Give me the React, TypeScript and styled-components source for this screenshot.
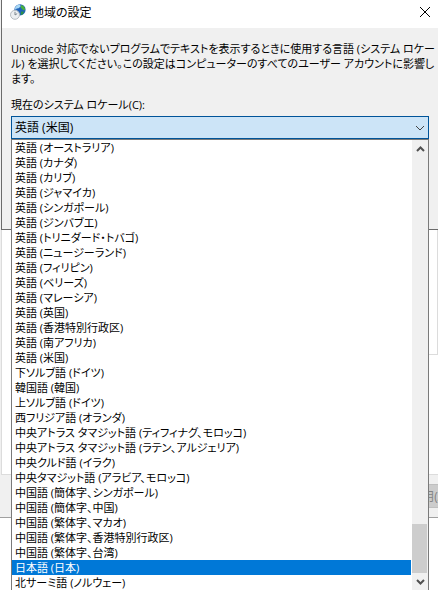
import React, { useState } from "react";
import styled, { createGlobalStyle } from "styled-components";

const Global = createGlobalStyle`
  * { box-sizing: border-box; }
  html, body, #root { height: 100%; }
  body {
    margin: 0;
    overflow: hidden;
    color: #000;
    font: 12px/15px "Open Sans", "Noto Sans CJK JP", sans-serif;
    font-feature-settings: "palt";
  }
`;

const Desktop = styled.div`
  position: relative;
  height: 100%;
  min-height: 100vh;
  overflow: hidden;
  background: #fff;
`;

const BackWindow = styled.div`
  position: absolute;
  inset: 0;
  display: flex;
  flex-direction: column;
`;

const BackBody = styled.div`
  padding-left: 1px;
  background: #f0f0f0;
`;

const BackPage = styled.div`
  height: 475px;
  padding-left: 12px;
  border-left: 1px solid #dcdcdc;
  border-bottom: 1px solid #dcdcdc;
  background: #fff;
`;

const BackGroup = styled.div`
  height: 355px;
  border: 1px solid #dcdcdc;
`;

const BackFooter = styled.div`
  display: flex;
  justify-content: flex-end;
  align-items: center;
  height: 43px;
  background: #f0f0f0;
  border-bottom: 1px solid #a0a0a0;
`;

const ApplyButton = styled.button`
  width: 75px;
  height: 24px;
  margin-right: -29px;
  padding: 0;
  border: 1px solid #bfbfbf;
  background: #ccc;
  color: #838383;
  font: inherit;
`;

const Dialog = styled.section`
  position: relative;
  margin-left: 1px;
  border-left: 1px solid #6b6b6b;
  border-bottom: 1px solid #6b6b6b;
  height: 230px;
  background: #f0f0f0;
`;

const TitleBar = styled.header`
  display: flex;
  align-items: center;
  height: 28px;
  padding: 0 7px 4px 8px;
  background: #fff;
`;

const Title = styled.h1`
  flex: 1;
  margin: 0 0 0 6px;
  font: inherit;
`;

const CloseButton = styled.button`
  display: flex;
  padding: 0;
  border: 0;
  background: none;
`;

const Content = styled.div`
  padding: 13px 0 0 9px;
`;

const Description = styled.p`
  margin: 0 0 11px;
  font-size: 11px;
`;

const Label = styled.label`
  display: block;
  margin-bottom: 4px;
  font-size: 11px;
`;

const ComboRow = styled.div`
  padding-right: 9px;
`;

const Combo = styled.button`
  display: flex;
  align-items: center;
  justify-content: space-between;
  width: 100%;
  height: 23px;
  padding: 0 3px;
  border: 1px solid #005499;
  background: #cce4f7;
  color: #000;
  font: inherit;
  font-feature-settings: inherit;
`;

const Popup = styled.div`
  display: flex;
  position: absolute;
  top: 139px;
  left: 9px;
  right: 9px;
  height: 456px;
  border: 1px solid #7a7a7a;
  background: #fff;
`;

const Options = styled.ul`
  flex: 1;
  min-width: 0;
  margin: 0;
  padding: 0 1px 0 0;
  list-style: none;
  font-size: 11px;
`;

const Option = styled.li<{ $selected: boolean }>`
  height: 15px;
  padding-left: 3px;
  white-space: nowrap;
  cursor: default;
  background: ${(p) => (p.$selected ? "#0078d7" : "#fff")};
  color: ${(p) => (p.$selected ? "#fff" : "#000")};
`;

const ScrollBar = styled.div`
  display: flex;
  flex-direction: column;
  width: 16px;
  height: 450px;
  background: #f0f0f0;
`;

const ScrollButton = styled.button`
  display: flex;
  align-items: center;
  justify-content: center;
  width: 16px;
  height: 17px;
  padding: 0;
  border: 0;
  background: none;
`;

const Track = styled.div`
  flex: 1;
  display: flex;
  align-items: flex-end;
`;

const Thumb = styled.div`
  width: 15px;
  height: 49px;
  background: #cdcdcd;
`;

const locales = [
  "英語 (オーストラリア)",
  "英語 (カナダ)",
  "英語 (カリブ)",
  "英語 (ジャマイカ)",
  "英語 (シンガポール)",
  "英語 (ジンバブエ)",
  "英語 (トリニダード・トバゴ)",
  "英語 (ニュージーランド)",
  "英語 (フィリピン)",
  "英語 (ベリーズ)",
  "英語 (マレーシア)",
  "英語 (英国)",
  "英語 (香港特別行政区)",
  "英語 (南アフリカ)",
  "英語 (米国)",
  "下ソルブ語 (ドイツ)",
  "韓国語 (韓国)",
  "上ソルブ語 (ドイツ)",
  "西フリジア語 (オランダ)",
  "中央アトラス タマジット語 (ティフィナグ、モロッコ)",
  "中央アトラス タマジット語 (ラテン、アルジェリア)",
  "中央クルド語 (イラク)",
  "中央タマジット語 (アラビア、モロッコ)",
  "中国語 (簡体字、シンガポール)",
  "中国語 (簡体字、中国)",
  "中国語 (繁体字、マカオ)",
  "中国語 (繁体字、香港特別行政区)",
  "中国語 (繁体字、台湾)",
  "日本語 (日本)",
  "北サーミ語 (ノルウェー)",
];

function RegionIcon() {
  return (
    <svg width="16" height="16" viewBox="0 0 16 16" aria-hidden="true">
      <circle cx="10" cy="5.800" r="5.600" fill="#1f62b8" />
      <path d="M4.800 4 7 1.200l3-.8.6 2-2 1.800-2 .4-.8 1.400z" fill="#a9d8f5" />
      <path d="M11 1 13.600 2l1.600 3-.8 1.400-2-.8-1.600-2z" fill="#49b03c" />
      <path d="m11 7.500 3.200.3-1.600 2.800-1.800.4z" fill="#2c9247" />
      <circle cx="5" cy="10.800" r="4.500" fill="#eceff1" stroke="#b4bbc0" />
      <path d="M5 7.800v3.200l2.200-1.400" fill="none" stroke="#7d878e" />
    </svg>
  );
}

export default function App() {
  const [selected, setSelected] = useState("日本語 (日本)");
  return (
    <Desktop>
      <Global />
      <BackWindow>
        <BackBody>
          <BackPage>
            <BackGroup />
          </BackPage>
        </BackBody>
        <BackFooter>
          <ApplyButton disabled>適用(A)</ApplyButton>
        </BackFooter>
      </BackWindow>
      <Dialog>
        <TitleBar>
          <RegionIcon />
          <Title>地域の設定</Title>
          <CloseButton aria-label="閉じる">
            <svg width="12" height="12" viewBox="0 0 12 12">
              <path d="m1 1 10 10M11 1 1 11" fill="none" stroke="#000" />
            </svg>
          </CloseButton>
        </TitleBar>
        <Content>
          <Description>
            Unicode 対応でないプログラムでテキストを表示するときに使用する言語 (システム ロケール) を選択してください。この設定はコンピューターのすべてのユーザー アカウントに影響します。
          </Description>
          <Label htmlFor="locale">現在のシステム ロケール(C):</Label>
          <ComboRow>
            <Combo id="locale" aria-haspopup="listbox" aria-expanded="true">
              英語 (米国)
              <svg width="10" height="6" viewBox="0 0 10 6" aria-hidden="true">
                <path d="m1 1 4 4 4-4" fill="none" stroke="#444" />
              </svg>
            </Combo>
          </ComboRow>
        </Content>
        <Popup>
          <Options role="listbox" aria-label="現在のシステム ロケール">
            {locales.map((name) => (
              <Option
                key={name}
                role="option"
                aria-selected={name === selected}
                $selected={name === selected}
                onClick={() => setSelected(name)}
              >
                {name}
              </Option>
            ))}
          </Options>
          <ScrollBar>
            <ScrollButton aria-label="上へ">
              <svg width="9" height="6" viewBox="0 0 9 6">
                <path d="m1 5 3.500-3.500L8 5" fill="none" stroke="#505050" strokeWidth="2" />
              </svg>
            </ScrollButton>
            <Track>
              <Thumb />
            </Track>
            <ScrollButton aria-label="下へ">
              <svg width="9" height="6" viewBox="0 0 9 6">
                <path d="m1 1 3.500 3.500L8 1" fill="none" stroke="#505050" strokeWidth="2" />
              </svg>
            </ScrollButton>
          </ScrollBar>
        </Popup>
      </Dialog>
    </Desktop>
  );
}
